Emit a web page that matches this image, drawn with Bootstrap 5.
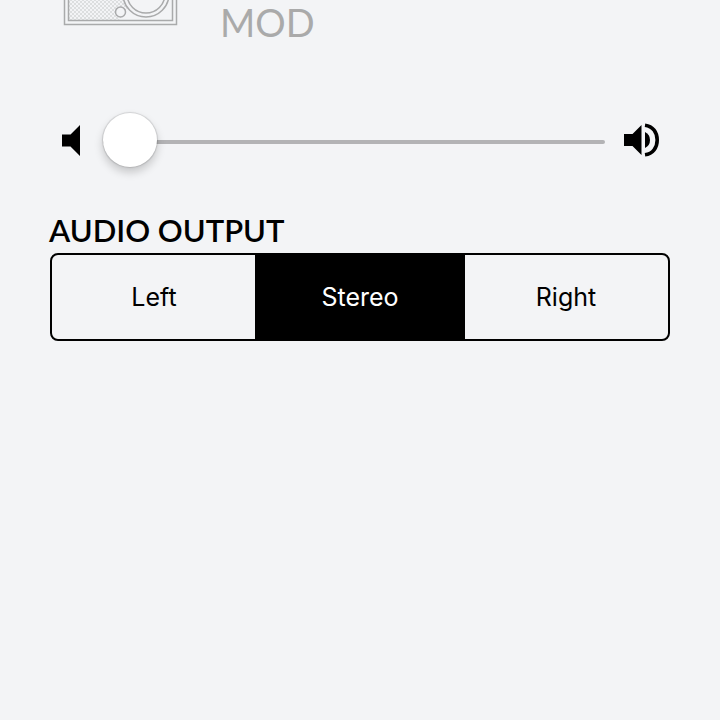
<!DOCTYPE html>
<html lang="en">
<head>
<meta charset="utf-8">
<meta name="viewport" content="width=device-width, initial-scale=1">
<title>Audio settings</title>
<link href="https://cdn.jsdelivr.net/npm/bootstrap@5.3.0/dist/css/bootstrap.min.css" rel="stylesheet">
<style>
body { background: #f3f4f6; color: #000; font-family: Inter, "Liberation Sans", sans-serif; }
.page { padding: 0 50px; }
.device { padding-left: 13px; gap: 42px; height: 52px; }
.device-name { font: 400 38px/44px Lato, sans-serif; color: #aaa; }
.volume { padding: 0 10px 0 12px; gap: 19px; margin-top: 60px; height: 56px; }
.volume-low { margin-right: 4px; }
.volume-range { appearance: none; -webkit-appearance: none; height: 56px; min-width: 0; margin: 4px 0 0; background: transparent; }
.volume-range::-webkit-slider-runnable-track { height: 4px; border-radius: 2px; background: #b3b3b5; }
.volume-range::-webkit-slider-thumb { -webkit-appearance: none; width: 54px; height: 54px; margin-top: -27px; border-radius: 50%; background: #fff; box-shadow: 0 0 1px 1px rgba(0,0,0,.12), 0 5px 10px rgba(0,0,0,.2); }
.volume-range::-moz-range-track { height: 4px; border-radius: 2px; background: #b3b3b5; }
.volume-range::-moz-range-thumb { width: 54px; height: 54px; border: 0; border-radius: 50%; background: #fff; }
.output-title { font: 600 31px/38px Lato, sans-serif; margin: 43px 0 4px -1px; }
.output-group { border: 2px solid #000; border-radius: 8px; overflow: hidden; }
.output-group .btn { --bs-btn-color: #000; --bs-btn-bg: transparent; --bs-btn-hover-color: #000; --bs-btn-active-bg: #000; --bs-btn-active-color: #fff; --bs-btn-border-width: 0; --bs-btn-border-radius: 0; flex: 1 1 0; font-size: 25px; line-height: 36px; padding: 24px 0; }
.output-group .btn.btn-center { flex-grow: 1.03; }
.output-group > .btn.btn { margin-left: 0; }
</style>
<script src="https://cdn.jsdelivr.net/npm/bootstrap@5.3.0/dist/js/bootstrap.bundle.min.js" defer></script>
</head>
<body>
<main class="page">
  <div class="device d-flex align-items-start">
    <svg width="115" height="26" viewBox="0 0 115 26" fill="none" stroke="#a9aaab" aria-hidden="true">
      <defs><pattern id="grille" width="4" height="4" patternUnits="userSpaceOnUse"><path d="M0 0l4 4M4 0L0 4" stroke="#d3d4d5" stroke-width=".7"/></pattern></defs>
      <path d="M6 0H62L64 8 56 20H6z" fill="url(#grille)" stroke="none"/>
      <path d="M1.5-2V24.500H113.500V-2" stroke-width="1.500"/>
      <path d="M5.500-2V20.500H109.500V-2" stroke-width="1.500"/>
      <circle cx="83" cy="-6" r="23" fill="#f3f4f6" stroke-width="1.500"/>
      <circle cx="83" cy="-6" r="19" stroke-width="1.500"/>
      <circle cx="57.500" cy="12" r="5" fill="#f3f4f6" stroke-width="1.500"/>
    </svg>
    <div class="device-name">MOD</div>
  </div>

  <div class="volume d-flex align-items-center">
    <svg class="volume-low flex-shrink-0" width="18" height="31" viewBox="0 0 18 31" aria-hidden="true"><path d="M0 9.500H8.500L18 0V31L8.500 21.500H0z"/></svg>
    <input type="range" class="volume-range flex-fill" min="0" max="100" value="0" aria-label="Volume">
    <svg class="flex-shrink-0" width="36" height="36" viewBox="0 0 36 36" aria-hidden="true">
      <path d="M0 12H8.500L17.500 3V33L8.500 24H0z"/>
      <path d="M21 10Q26 12.500 26 18T21 26z"/>
      <path d="M21 3.200C29 4.200 33.200 10.500 33.200 18S29 31.800 21 32.800" fill="none" stroke="#000" stroke-width="3.600"/>
    </svg>
  </div>

  <h1 class="output-title" id="output-label">AUDIO OUTPUT</h1>
  <div class="btn-group output-group d-flex" role="group" aria-labelledby="output-label">
    <input type="radio" class="btn-check" name="output" id="left" autocomplete="off">
    <label class="btn" for="left">Left</label>
    <input type="radio" class="btn-check" name="output" id="stereo" autocomplete="off" checked>
    <label class="btn btn-center" for="stereo">Stereo</label>
    <input type="radio" class="btn-check" name="output" id="right" autocomplete="off">
    <label class="btn" for="right">Right</label>
  </div>
</main>
</body>
</html>
